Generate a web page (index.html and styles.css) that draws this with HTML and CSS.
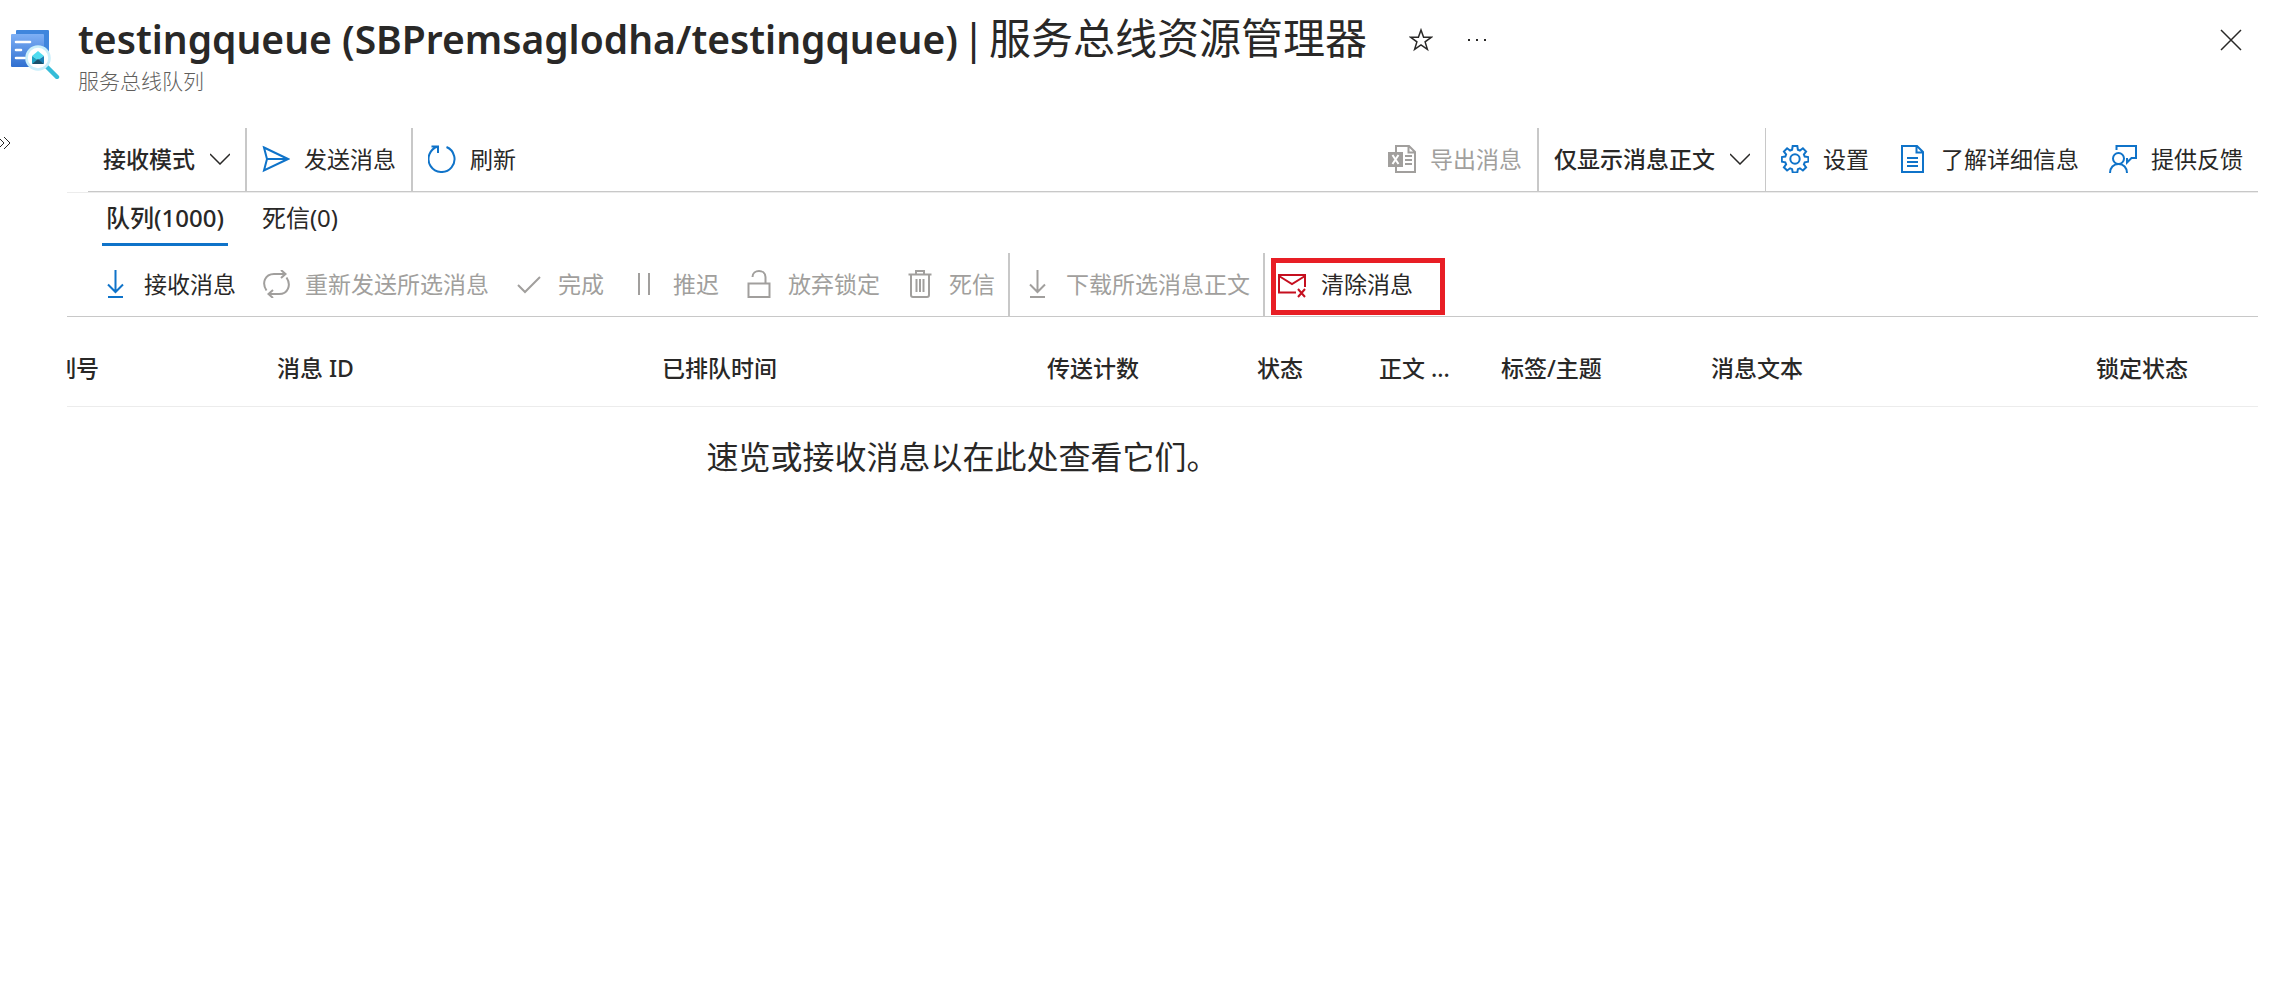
FILE: index.html
```html
<!DOCTYPE html>
<html lang="zh-CN">

<head>
  <meta charset="UTF-8" />
  <meta name="viewport" content="width=device-width, initial-scale=1.0" />
  <title>testingqueue | 服务总线资源管理器</title>
  <link rel="stylesheet" href="styles.css">
</head>

<body>
  <!-- 顶部标题 -->
  <header class="header">
    <svg class="logo" viewBox="0 0 50 50" aria-hidden="true">
      <defs>
        <linearGradient id="page" x1="0" y1="0" x2="0" y2="1">
          <stop offset="0" stop-color="#7fb0f5" />
          <stop offset="1" stop-color="#2f6fd0" />
        </linearGradient>
      </defs>
      <path fill="#3f86dd" d="M6 1h31a1 1 0 0 1 1 1v32H5V2a1 1 0 0 1 1-1z" />
      <path fill="url(#page)" d="M1 5h31a1 1 0 0 1 1 1v32H1a1 1 0 0 1-1-1V6a1 1 0 0 1 1-1z" />
      <path stroke="#fff" stroke-width="2.6" stroke-linecap="round" d="M5 13h14M5 21h5M5 29h9" />
      <path stroke="#35bcd8" stroke-width="4.4" stroke-linecap="round" d="M36 38l10 10" />
      <circle cx="27" cy="29" r="11.5" fill="#fff" stroke="#c9effb" stroke-width="2.6" />
      <path fill="#50dcf0" d="M21 27l6-5 6 5-6 4z" />
      <path fill="#1aa3c4" d="M21 27l6 4-6 4z" />
      <path fill="#1b7fb5" d="M33 27l-6 4 6 4z" />
      <path fill="#17506b" d="M21 35l6-5 6 5z" />
    </svg>
    <div class="titles">
      <div class="title-row">
        <h1><strong>testingqueue (SBPremsaglodha/testingqueue)</strong> <span>|</span> <span>服务总线资源管理器</span></h1>
        <button class="icon-btn star" aria-label="收藏">
          <svg viewBox="0 0 24 24"><path d="M12 2l2.6 7.3h7.6l-6.1 4.6 2.3 7.5L12 16.9l-6.4 4.5 2.3-7.5-6.1-4.6h7.6z" /></svg>
        </button>
        <button class="icon-btn more" aria-label="更多">
          <svg viewBox="0 0 24 24"><path class="solid" d="M3 11h2v2H3zM11 11h2v2h-2zM19 11h2v2h-2z" /></svg>
        </button>
      </div>
      <p class="subtitle">服务总线队列</p>
    </div>
    <button class="icon-btn close" aria-label="关闭">
      <svg viewBox="0 0 24 24"><path d="M2 2l20 20M22 2L2 22" /></svg>
    </button>
  </header>

  <div class="w">
    <!-- 侧边栏展开按钮 -->
    <button class="expand" aria-label="展开">
      <svg viewBox="0 0 12 14"><path d="M-2 1l6 6-6 6M4 1l6 6-6 6" /></svg>
    </button>

    <main class="main">
      <!-- 第一行工具栏 -->
      <div class="top-wrap">
        <div class="toolbar top">
          <label class="drop">
            <select aria-label="接收模式">
              <option>接收模式</option>
            </select>
            <svg class="chevron" viewBox="0 0 20 12"><path d="M0 1l10 10L20 1" /></svg>
          </label>
          <span class="line"></span>
          <button class="btn">
            <svg class="icon" viewBox="0 0 28 28"><path d="M2 2.500L26 14 2 25.500 5 14zM5 14H26" /></svg>
            发送消息
          </button>
          <span class="line"></span>
          <button class="btn">
            <svg class="icon" viewBox="0 0 28 28"><path d="M18.500 2A13 13 0 1 1 10 1.500M3.500 1.500H10v6.500" /></svg>
            刷新
          </button>

          <button class="btn right" disabled>
            <svg class="icon" viewBox="0 0 28 28">
              <path d="M8 8V1h13l6 6v20H8v-7M20.500 1v6.500H27M17 11h7M17 15h7M17 19h7" />
              <path class="solid" d="M0 7h15v15H0z" />
              <path class="white" d="M4.500 10l6 9M10.500 10l-6 9" />
            </svg>
            导出消息
          </button>
          <span class="line"></span>
          <label class="drop">
            <select aria-label="消息正文显示">
              <option>仅显示消息正文</option>
            </select>
            <svg class="chevron" viewBox="0 0 20 12"><path d="M0 1l10 10L20 1" /></svg>
          </label>
          <span class="line thin"></span>
          <button class="btn">
            <svg class="icon" viewBox="0 0 28 28">
              <path d="M11.700 1h4.600l.6 3.700 2 .8 3-2.200 3.200 3.200-2.200 3 .8 2 3.700.6v4.600l-3.700.6-.8 2 2.200 3-3.200 3.200-3-2.200-2 .8-.6 3.300h-4.600l-.6-3.300-2-.8-3 2.200-3.200-3.200 2.200-3-.8-2L.8 16.700v-4.600l3.500-.6.8-2-2.200-3 3.200-3.200 3 2.200 2-.8z" />
              <circle cx="14" cy="14" r="4.700" />
            </svg>
            设置
          </button>
          <button class="btn">
            <svg class="icon" viewBox="0 0 28 28">
              <path d="M3 1h15l6 6v20H3zM17.500 1v6.500H24M8 13h11M8 17h11M8 21h11" />
            </svg>
            了解详细信息
          </button>
          <button class="btn">
            <svg class="icon" viewBox="0 0 28 28">
              <circle cx="9.500" cy="13.500" r="5.500" />
              <path d="M1 28c0-5.500 3.500-9 8.500-9s8.500 3.500 8.500 9M7.500 5V1H27v12h-4.500L18 17.500V13" />
            </svg>
            提供反馈
          </button>
        </div>
      </div>

      <!-- 标签页 -->
      <div class="tabs" role="tablist">
        <button class="tab active" role="tab" aria-selected="true">队列(1000)</button>
        <button class="tab" role="tab" aria-selected="false">死信(0)</button>
      </div>

      <!-- 第二行工具栏 -->
      <div class="toolbar actions">
        <button class="btn">
          <svg class="icon" viewBox="0 0 28 28"><path d="M14.500 0v22M7 14.500l7.500 7.500 7.500-7.500M7 27h15" /></svg>
          接收消息
        </button>
        <button class="btn" disabled>
          <svg class="icon" viewBox="0 0 28 28">
            <path d="M4.500 20.500C-.5 13 3 4 12 4h11M19 0l4.500 4-4.500 4M24.500 7.500C29.500 15 26 24 17 24H7M11 20l-4.500 4 4.500 4" />
          </svg>
          重新发送所选消息
        </button>
        <button class="btn" disabled>
          <svg class="icon" viewBox="0 0 28 28"><path d="M3 15l7 7L25 7" /></svg>
          完成
        </button>
        <button class="btn" disabled>
          <svg class="icon" viewBox="0 0 28 28"><path d="M9 3v22M19 3v22" /></svg>
          推迟
        </button>
        <button class="btn" disabled>
          <svg class="icon" viewBox="0 0 28 28"><path d="M3.500 13.500h21V27h-21zM7.500 7c0-8 13-8 13 0v6.500" /></svg>
          放弃锁定
        </button>
        <button class="btn" disabled>
          <svg class="icon" viewBox="0 0 28 28">
            <path d="M2.500 4.500h23M5 4.500V25q0 2 2 2h14q2 0 2-2V4.500M10 4.500V1h8v3.500M10.500 9v13M14 9v13M17.500 9v13" />
          </svg>
          死信
        </button>
        <span class="line"></span>
        <button class="btn" disabled>
          <svg class="icon" viewBox="0 0 28 28"><path d="M14.500 0v22M7 14.500l7.500 7.500 7.500-7.500M7 27h15" /></svg>
          下载所选消息正文
        </button>
        <span class="line"></span>
        <button class="btn purge">
          <svg class="icon" viewBox="0 0 28 28">
            <path d="M18 22.500H1V5h26v12M1 6l13 8 13-8M20 19l7 8M27 19l-7 8" />
          </svg>
          清除消息
        </button>
      </div>

      <!-- 消息列表 -->
      <div class="list">
        <table>
          <colgroup>
            <col class="c-seq">
            <col class="c-wide">
            <col class="c-wide">
            <col class="c-mid">
            <col class="c-small">
            <col class="c-small">
            <col class="c-mid">
            <col class="c-wide">
            <col>
          </colgroup>
          <thead>
            <tr>
              <th>序列号</th>
              <th>消息 ID</th>
              <th>已排队时间</th>
              <th>传送计数</th>
              <th>状态</th>
              <th>正文 ...</th>
              <th>标签/主题</th>
              <th>消息文本</th>
              <th>锁定状态</th>
            </tr>
          </thead>
        </table>
      </div>
      <p class="empty">速览或接收消息以在此处查看它们。</p>
    </main>
  </div>
</body>

</html>
```
FILE: styles.css
```css
* {
  margin: 0;
  padding: 0;
  box-sizing: border-box;
}

body {
  background: #fff;
  color: #292827;
  font: 23px/32px "Noto Sans", "Noto Sans CJK SC", sans-serif;
}

button,
select {
  border: none;
  outline: none;
  background: none;
  color: inherit;
  font: inherit;
  cursor: pointer;
}

svg {
  display: block;
  flex: none;
  fill: none;
  stroke: currentColor;
  stroke-width: 2;
}

.solid {
  fill: currentColor;
  stroke: none;
}

.white {
  stroke: #fff;
}

/* 顶部标题 */
.header {
  display: flex;
  align-items: flex-start;
  height: 128px;
  padding: 12px 26px 0 11px;
}

.logo {
  width: 50px;
  height: 50px;
  margin: 17px 17px 0 0;
  stroke: none;
}

.titles {
  flex: 1;
}

.title-row {
  display: flex;
  align-items: center;
  height: 56px;
}

h1 {
  display: flex;
  align-items: baseline;
  gap: 4px;
  margin-right: 42px;
  padding-bottom: 4px;
  font-size: 42px;
  font-weight: 400;
  line-height: 52px;
  white-space: nowrap;
}

h1 strong {
  font-size: 39px;
  font-weight: 600;
}

.subtitle {
  color: #605e5c;
  font-size: 21px;
  font-weight: 300;
  line-height: 26px;
}

.icon-btn svg {
  width: 24px;
  height: 24px;
  stroke-width: 1.5;
}

.more {
  margin-left: 32px;
}

.close {
  margin-top: 16px;
}

/* 主体 */
.w {
  display: flex;
  align-items: flex-start;
}

.expand {
  width: 67px;
  padding-top: 8px;
}

.expand svg {
  width: 12px;
  height: 14px;
  stroke-width: 1;
}

.main {
  flex: 1;
  min-width: 0;
  margin-right: 11px;
}

.top-wrap {
  padding-left: 21px;
  border-bottom: 1px solid #ececec;
}

.toolbar {
  display: flex;
  height: 64px;
  border-bottom: 1px solid #c8c8c8;
  white-space: nowrap;
}

.btn,
.drop {
  display: flex;
  align-items: center;
  gap: 14px;
  padding: 0 15px 2px;
}

.btn:disabled {
  color: #a19f9d;
  cursor: default;
}

.right {
  margin-left: auto;
}

.icon {
  width: 28px;
  height: 28px;
  color: #0f73c9;
}

.btn:disabled .icon {
  color: #a19f9d;
}

.drop {
  gap: 15px;
}

.drop select {
  appearance: none;
  font-weight: 500;
}

.chevron {
  width: 20px;
  height: 12px;
  stroke-width: 1.5;
}

.line {
  width: 2px;
  background: #c8c8c8;
}

.thin {
  width: 1px;
}

/* 标签页 */
.tabs {
  display: flex;
  gap: 30px;
  height: 60px;
  padding-left: 35px;
}

.tab {
  height: 53px;
  padding: 0 4px;
  border-bottom: 3px solid transparent;
  font-size: 24px;
}

.tab.active {
  border-color: #0f73c9;
  font-weight: 500;
}

.actions {
  padding-left: 21px;
}

.actions .btn {
  gap: 15px;
  padding: 0 13px 2px;
}

.actions .purge {
  margin: 5px 0 1px 6px;
  padding: 0 27px 5px 2px;
  border: 5px solid #e81e25;
}

.purge .icon {
  color: #c50f1f;
}

/* 消息列表 */
.list {
  overflow: hidden;
  border-bottom: 1px solid #ececec;
}

table {
  width: 100%;
  margin-left: -37px;
  border-collapse: collapse;
  table-layout: fixed;
}

th {
  height: 89px;
  padding-top: 13px;
  font-weight: 500;
  text-align: left;
  white-space: nowrap;
}

.c-seq {
  width: 247px;
}

.c-wide {
  width: 385px;
}

.c-mid {
  width: 210px;
}

.c-small {
  width: 122px;
}

.empty {
  padding: 29px 400px 0 0;
  font-size: 32px;
  line-height: 42px;
  text-align: center;
}
```
